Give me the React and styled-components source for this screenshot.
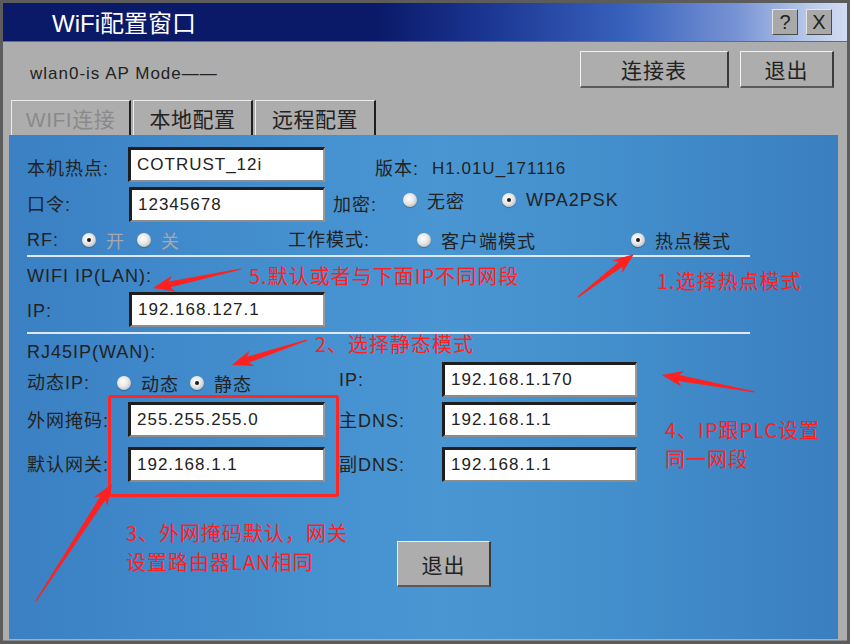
import styled, { createGlobalStyle } from 'styled-components';

const SANS = `"Liberation Sans", "Noto Sans CJK SC", sans-serif`;
const CJK = `"Noto Sans CJK SC", "Liberation Sans", sans-serif`;

const GlobalStyle = createGlobalStyle`
  html, body { margin: 0; padding: 0; background: #ffffff; }
  * { box-sizing: border-box; }
`;

const Screen = styled.div`
  position: relative;
  width: 850px;
  height: 644px;
  overflow: hidden;
`;

const Window = styled.div`
  display: flex;
  flex-direction: column;
  width: 100%;
  height: 100%;
  border: 3px solid #5c5c5c;
  background: #adadad;
  font-family: ${SANS};
  color: #222;
`;

const TitleBar = styled.div`
  display: flex;
  align-items: center;
  height: 39px;
  padding: 0 15px 1px 49px;
  border-bottom: 1px solid #6a6a6a;
  background: linear-gradient(
    to right,
    #0a1968 0%,
    #0a1968 44%,
    #1c3794 58%,
    #3862bc 74%,
    #7893d4 87%,
    #b6c6e9 95%,
    #d2dcf2 100%
  );
`;

const TitleText = styled.div`
  font-size: 24px;
  color: #ffffff;
`;

const TitleButtons = styled.div`
  display: flex;
  gap: 8px;
  margin-left: auto;
`;

const TitleButton = styled.button`
  width: 26px;
  height: 26px;
  padding: 0;
  font-family: ${SANS};
  font-size: 20px;
  line-height: 22px;
  color: #222;
  background: #a9a9a9;
  border: 1px solid;
  border-color: #e4e4e4 #4a4a4a #4a4a4a #e4e4e4;
`;

const Body = styled.div`
  flex: 1;
  display: flex;
  flex-direction: column;
  padding: 0 9px 1px 6px;
  border-bottom: 1px solid #8a8a8a;
`;

const Header = styled.div`
  display: flex;
  align-items: center;
  height: 58px;
  padding: 0 4px 0 21px;
`;

const ModeText = styled.div`
  font-size: 17px;
  letter-spacing: 1px;
  margin-top: 6px;
`;

const HeaderButtons = styled.div`
  display: flex;
  gap: 11px;
  margin-left: auto;
  margin-top: -4px;
`;

const PlainButton = styled.button`
  width: ${(p) => p.$w}px;
  height: ${(p) => p.$h}px;
  padding: 0;
  font-family: ${CJK};
  font-size: 21px;
  letter-spacing: 1px;
  color: #222;
  background: #adadad;
  border-style: solid;
  border-width: 1px 2px 2px 1px;
  border-color: #f2f2f2 #3a3a3a #5a5a5a #f2f2f2;
`;

const TabStrip = styled.div`
  display: flex;
  gap: 2px;
  height: 35px;
  padding-left: 2px;
`;

const Tab = styled.div`
  display: flex;
  align-items: center;
  justify-content: center;
  width: ${(p) => p.$w}px;
  font-size: 21px;
  letter-spacing: 0.5px;
  color: ${(p) => (p.$disabled ? '#8a8a8a' : '#222')};
  border-style: solid;
  border-width: 1px 2px 0 1px;
  border-color: #ececec #1e1e1e transparent #ececec;
`;

const Panel = styled.div`
  flex: 1;
  display: flex;
  flex-direction: column;
  padding: 12px 0 0 18px;
  background: linear-gradient(
    to right,
    #3a80c3 0%,
    #4590cf 35%,
    #4a96d3 52%,
    #4490cd 70%,
    #3a7fc0 100%
  );
`;

const Row = styled.div`
  display: flex;
  align-items: ${(p) => p.$align || 'center'};
  height: ${(p) => p.$h || 35}px;
  margin-top: ${(p) => p.$mt || 0}px;
`;

const Label = styled.div`
  flex: none;
  width: ${(p) => (p.$w ? `${p.$w}px` : 'auto')};
  margin-left: ${(p) => p.$ml || 0}px;
  margin-top: ${(p) => p.$drop || 0}px;
  font-size: ${(p) => p.$size || 18}px;
  letter-spacing: 1px;
  line-height: 20px;
  white-space: nowrap;
`;

const Field = styled.input`
  flex: none;
  width: ${(p) => p.$w}px;
  height: 35px;
  padding: 0 0 0 6px;
  font-family: ${SANS};
  font-size: 17px;
  letter-spacing: 1px;
  color: #222;
  background: #ffffff;
  border-style: solid;
  border-width: 3px 2px 2px 3px;
  border-color: #1e1e1e #9a9a9a #8c8c8c #1e1e1e;
  outline: none;
`;

const Choice = styled.label`
  flex: none;
  display: flex;
  align-items: center;
  gap: 10px;
  width: ${(p) => (p.$w ? `${p.$w}px` : 'auto')};
  margin-bottom: ${(p) => (p.$raise ? 9 : 0)}px;
  font-size: 18px;
  letter-spacing: 1px;
  color: ${(p) => (p.$muted ? '#a4a8ad' : '#222')};
`;

const RadioDot = styled.span`
  position: relative;
  flex: none;
  width: 14px;
  height: 14px;
  border-radius: 50%;
  background: radial-gradient(circle at 42% 40%, #ffffff 0%, #e6e6e6 45%, #b4b4b4 85%, #8e8e8e 100%);
  box-shadow: 0 1px 1px rgba(0, 0, 0, 0.25);

  &::after {
    content: '';
    display: ${(p) => (p.$checked ? 'block' : 'none')};
    position: absolute;
    left: 5px;
    top: 5px;
    width: 4px;
    height: 4px;
    border-radius: 50%;
    background: #1a1a1a;
  }
`;

const Divider = styled.div`
  width: 723px;
  height: 2px;
  margin-top: ${(p) => p.$mt || 0}px;
  background: #dfe7f0;
`;

const Columns = styled.div`
  display: grid;
  grid-template-columns: 312px auto;
  grid-auto-rows: auto;
`;

const Cell = styled.div`
  display: flex;
  align-items: center;
  height: 35px;
  margin-top: ${(p) => p.$mt || 0}px;
  padding-top: ${(p) => p.$pt || 0}px;
`;

const Footer = styled.div`
  display: flex;
  margin: 59px 0 0 370px;
`;

const Overlay = styled.div`
  position: absolute;
  inset: 0;
  pointer-events: none;
`;

const Note = styled.div`
  position: absolute;
  left: ${(p) => p.$x}px;
  top: ${(p) => p.$y}px;
  font-family: ${CJK};
  font-size: 20px;
  letter-spacing: 1px;
  line-height: 29px;
  color: #ff1f1f;
  white-space: nowrap;
`;

const Frame = styled.div`
  position: absolute;
  left: 108px;
  top: 395px;
  width: 231px;
  height: 102px;
  border: 3px solid #ff2626;
  border-radius: 3px;
`;

const ArrowLayer = styled.svg`
  position: absolute;
  left: 0;
  top: 0;
`;

// tapered callout arrow from tail to tip
function arrowPoints([tx, ty], [px, py]) {
  const dx = px - tx;
  const dy = py - ty;
  const len = Math.hypot(dx, dy);
  const ux = dx / len;
  const uy = dy / len;
  const nx = -uy;
  const ny = ux;
  const head = 17;
  const back = 21;
  const neck = 3;
  const barb = 8;
  const at = (d, w) => `${(px - ux * d + nx * w).toFixed(1)},${(py - uy * d + ny * w).toFixed(1)}`;
  return [
    `${(tx + nx * 0.6).toFixed(1)},${(ty + ny * 0.6).toFixed(1)}`,
    at(head, neck),
    at(back, barb),
    `${px},${py}`,
    at(back, -barb),
    at(head, -neck),
    `${(tx - nx * 0.6).toFixed(1)},${(ty - ny * 0.6).toFixed(1)}`,
  ].join(' ');
}

const arrows = [
  [[241, 269], [153, 288]],
  [[578, 297], [634, 254]],
  [[307, 340], [232, 365]],
  [[755, 392], [662, 375]],
  [[36, 601], [112, 484]],
];

function Radio({ checked, children, ...rest }) {
  return (
    <Choice {...rest}>
      <RadioDot $checked={checked} />
      {children}
    </Choice>
  );
}

export default function App() {
  return (
    <Screen>
      <GlobalStyle />
      <Window>
        <TitleBar>
          <TitleText>WiFi配置窗口</TitleText>
          <TitleButtons>
            <TitleButton>?</TitleButton>
            <TitleButton>X</TitleButton>
          </TitleButtons>
        </TitleBar>
        <Body>
          <Header>
            <ModeText>wlan0-is AP Mode——</ModeText>
            <HeaderButtons>
              <PlainButton $w={149} $h={37}>连接表</PlainButton>
              <PlainButton $w={94} $h={37}>退出</PlainButton>
            </HeaderButtons>
          </Header>
          <TabStrip>
            <Tab $w={120} $disabled>WIFI连接</Tab>
            <Tab $w={120}>本地配置</Tab>
            <Tab $w={121}>远程配置</Tab>
          </TabStrip>
          <Panel>
            <Row>
              <Label $w={101} $drop={8}>本机热点:</Label>
              <Field $w={197} defaultValue="COTRUST_12i" />
              <Label $w={57} $ml={50} $drop={8}>版本:</Label>
              <Label $size={17} $drop={8}>H1.01U_171116</Label>
            </Row>
            <Row $mt={5}>
              <Label $w={102}>口令:</Label>
              <Field $w={196} defaultValue="12345678" />
              <Label $w={70} $ml={8}>加密:</Label>
              <Radio $w={99} $raise>无密</Radio>
              <Radio checked $raise>WPA2PSK</Radio>
            </Row>
            <Row $h={31} $mt={2}>
              <Label $w={55}>RF:</Label>
              <Radio checked $muted $w={55}>开</Radio>
              <Radio $muted $w={151}>关</Radio>
              <Label $w={129}>工作模式:</Label>
              <Radio $w={214}>客户端模式</Radio>
              <Radio checked>热点模式</Radio>
            </Row>
            <Divider />
            <Row>
              <Label $drop={3}>WIFI IP(LAN):</Label>
            </Row>
            <Row>
              <Label $w={102} $drop={3}>IP:</Label>
              <Field $w={196} defaultValue="192.168.127.1" />
            </Row>
            <Divider $mt={5} />
            <Row $h={28} $align="flex-end">
              <Label>RJ45IP(WAN):</Label>
            </Row>
            <Columns>
              <Cell $pt={6}>
                <Label $w={90}>动态IP:</Label>
                <Radio $w={73}>动态</Radio>
                <Radio checked>静态</Radio>
              </Cell>
              <Cell>
                <Label $w={103}>IP:</Label>
                <Field $w={195} defaultValue="192.168.1.170" />
              </Cell>
              <Cell $mt={5}>
                <Label $w={101} $drop={3}>外网掩码:</Label>
                <Field $w={197} defaultValue="255.255.255.0" />
              </Cell>
              <Cell $mt={5}>
                <Label $w={103} $drop={3}>主DNS:</Label>
                <Field $w={195} defaultValue="192.168.1.1" />
              </Cell>
              <Cell $mt={10}>
                <Label $w={101}>默认网关:</Label>
                <Field $w={197} defaultValue="192.168.1.1" />
              </Cell>
              <Cell $mt={10}>
                <Label $w={103}>副DNS:</Label>
                <Field $w={195} defaultValue="192.168.1.1" />
              </Cell>
            </Columns>
            <Footer>
              <PlainButton $w={94} $h={46}>退出</PlainButton>
            </Footer>
          </Panel>
        </Body>
      </Window>
      <Overlay>
        <Frame />
        <ArrowLayer width="850" height="644" viewBox="0 0 850 644">
          {arrows.map(([tail, tip], i) => (
            <polygon key={i} points={arrowPoints(tail, tip)} fill="#ff2020" />
          ))}
        </ArrowLayer>
        <Note $x={249} $y={261}>5.默认或者与下面IP不同网段</Note>
        <Note $x={657} $y={266}>1.选择热点模式</Note>
        <Note $x={315} $y={329}>2、选择静态模式</Note>
        <Note $x={665} $y={415}>
          4、IP跟PLC设置
          <br />
          同一网段
        </Note>
        <Note $x={126} $y={518}>
          3、外网掩码默认，网关
          <br />
          设置路由器LAN相同
        </Note>
      </Overlay>
    </Screen>
  );
}
